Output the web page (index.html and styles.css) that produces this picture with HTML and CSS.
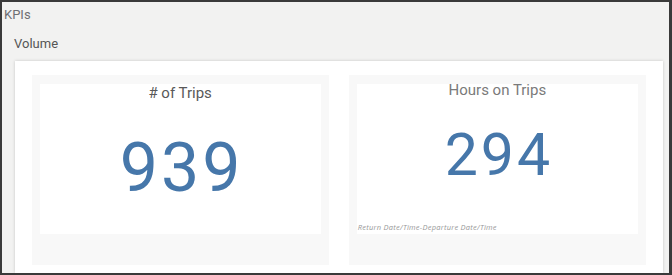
FILE: index.html
```html
<!DOCTYPE html>
<html lang="en">
<head>
    <meta charset="UTF-8">
    <meta name="viewport" content="width=device-width, initial-scale=1.0">
    <title>KPIs</title>
    <link rel="stylesheet" href="styles.css">
</head>
<body>
    <div class="sheet">
        <div class="sheet-title">KPIs</div>

        <div class="container">
            <div class="container-title">Volume</div>

            <div class="panel">
                <div class="kpi-card">
                    <div class="kpi">
                        <div class="kpi-title">&#35; of Trips</div>
                        <div class="kpi-value kpi-value-large">939</div>
                    </div>
                </div>

                <div class="kpi-card">
                    <div class="kpi">
                        <div class="kpi-title kpi-title-light">Hours on Trips</div>
                        <div class="kpi-value kpi-value-small">294</div>
                        <div class="kpi-footer">Return Date/Time-Departure Date/Time</div>
                    </div>
                </div>
            </div>
        </div>
    </div>
</body>
</html>
```

FILE: styles.css
```css
* {
    margin: 0;
    padding: 0;
    box-sizing: border-box;
}

body {
    font-family: Roboto, "Liberation Sans", sans-serif;
    background: #ffffff;
    color: #555;
}

.sheet {
    width: 672px;
    height: 275px;
    background: #f2f2f1;
    border: 2px solid #3a3a3a;
    border-right-width: 3px;
    overflow: hidden;
}

.sheet-title {
    font-size: 13px;
    line-height: 18px;
    height: 22px;
    padding: 4px 0 0 2px;
    color: #6f6f74;
}

.container {
    padding: 0 6px 0 12px;
}

.container-title {
    font-size: 13px;
    line-height: 18px;
    margin: 11px 0 8px 0;
    color: #555;
}

.panel {
    display: flex;
    gap: 20px;
    background: #ffffff;
    padding: 14px 17px 8px 17px;
    box-shadow: 0 0 3px rgba(0, 0, 0, 0.18);
    margin-left: 0.5px;
}

.kpi-card {
    flex: 1;
    background: #f8f8f8;
    padding: 9px 8px 31px 8px;
}

.kpi {
    height: 150px;
    background: #ffffff;
    display: flex;
    flex-direction: column;
}

.kpi-title {
    font-size: 15px;
    line-height: 18px;
    text-align: center;
    color: #595959;
}

.kpi-title-light {
    color: #7a7a7a;
    margin-top: -3px;
}

.kpi-value {
    flex: 1;
    display: flex;
    align-items: center;
    justify-content: center;
    color: #4677aa;
    line-height: 1;
}

.kpi-value-large {
    font-size: 68px;
    letter-spacing: 3px;
    padding: 0 0 0 3px;
}

.kpi-value-small {
    font-size: 59px;
    letter-spacing: 3px;
    padding: 0 0 12px 3px;
}

.kpi-footer {
    font-family: "Open Sans", Roboto, sans-serif;
    font-size: 7.5px;
    letter-spacing: 0.25px;
    line-height: 10px;
    font-style: italic;
    color: #999;
    padding: 0 0 2px 1px;
}
```
